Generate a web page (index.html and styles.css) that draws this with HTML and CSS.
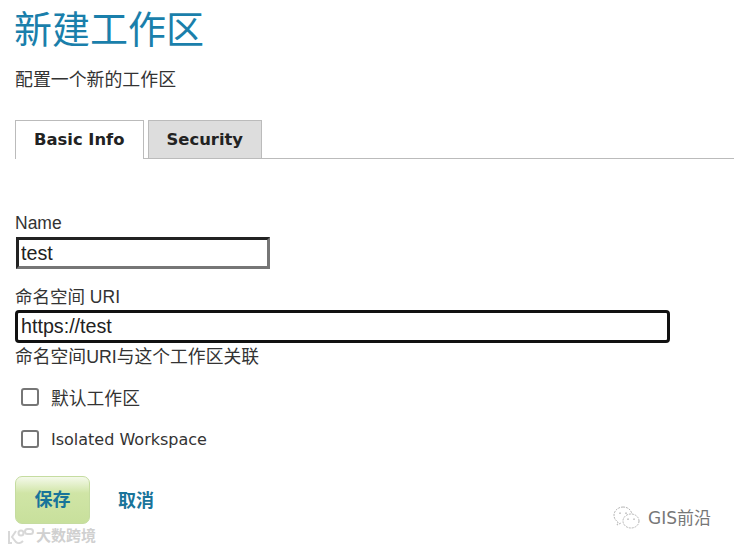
FILE: index.html
```html
<!DOCTYPE html>
<html lang="zh-CN">
<head>
    <meta charset="UTF-8">
    <meta name="viewport" content="width=device-width, initial-scale=1.0">
    <title>新建工作区</title>
    <link rel="stylesheet" href="styles.css">
</head>
<body>
    <h1 class="title">新建工作区</h1>
    <p class="subtitle">配置一个新的工作区</p>

    <div class="tabs">
        <a class="tab active">Basic Info</a>
        <a class="tab">Security</a>
    </div>

    <form class="form">
        <label class="field-label">Name</label>
        <input class="name-input" type="text" value="test">

        <label class="field-label uri-label">命名空间 URI</label>
        <input class="uri-input" type="text" value="https://test">
        <div class="help">命名空间URI与这个工作区关联</div>

        <label class="check first"><span class="box"></span>默认工作区</label>
        <label class="check"><span class="box"></span>Isolated Workspace</label>

        <div class="actions">
            <a class="save">保存</a>
            <a class="cancel">取消</a>
        </div>
    </form>

    <div class="mark-left">
        <svg width="28" height="19" viewBox="0 0 28 19" fill="none" stroke="#d8d8d8" stroke-width="2">
            <path d="M2 4v12h3M9 4L5 10l4 5c2 2 5 1 7-1"/>
            <circle cx="14" cy="6" r="2.5"/>
            <rect x="18" y="2" width="8" height="5" rx="2.5"/>
        </svg>
        <span>大数跨境</span>
    </div>

    <div class="mark-right">
        <svg width="28" height="26" viewBox="0 0 28 26" fill="none" stroke="#b5b5b5" stroke-width="1" stroke-dasharray="2 1">
            <path d="M10 2C5 2 1 6 1 10c0 3 1 5 4 7l-1 3 4-2"/>
            <path d="M10 2c5 0 8 3 9 7"/>
            <ellipse cx="18" cy="16" rx="8" ry="7"/>
            <circle cx="7" cy="8" r="0.6"/>
            <circle cx="13" cy="8" r="0.6"/>
            <circle cx="15" cy="14" r="0.6"/>
            <circle cx="21" cy="14" r="0.6"/>
        </svg>
        <span>GIS前沿</span>
    </div>
</body>
</html>
```

FILE: styles.css
```css
body {
    margin: 0;
    padding: 0 0 0 15px;
    height: 551px;
    box-sizing: border-box;
    overflow: hidden;
    position: relative;
    background-color: #ffffff;
    color: #222222;
    font-family: "DejaVu Sans", "Noto Sans CJK SC", sans-serif;
}

.title {
    margin: 0 0 0 -1px;
    padding-top: 7px;
    font-size: 38px;
    line-height: 46px;
    font-weight: normal;
    color: #1a7fab;
}

.subtitle {
    margin: 13px 0 0;
    font-size: 17.9px;
    line-height: 28px;
    color: #333333;
}

.tabs {
    display: flex;
    gap: 4px;
    margin-top: 26px;
    height: 38px;
    border-bottom: 1px solid #bbbbbb;
}

.tab {
    box-sizing: border-box;
    height: 38px;
    padding: 0 18px;
    border: 1px solid #bbbbbb;
    border-bottom: none;
    background-color: #dddddd;
    font-size: 16.4px;
    font-weight: bold;
    line-height: 38px;
}

.tab.active {
    height: 39px;
    background-color: #ffffff;
}

.form {
    padding-top: 52px;
}

.field-label {
    display: block;
    font-family: "Liberation Sans", "Noto Sans CJK SC", sans-serif;
    font-size: 17.5px;
    line-height: 24px;
    color: #333333;
}

.uri-label {
    margin-top: 16px;
}

input {
    display: block;
    box-sizing: border-box;
    margin-left: 1px;
    padding: 0 2px;
    font-family: "Liberation Sans", sans-serif;
    font-size: 19.7px;
    color: #222222;
    outline: none;
}

.name-input {
    width: 254px;
    height: 32px;
    margin-top: 2px;
    border: 3px solid;
    border-color: #222222 #767676 #767676 #222222;
}

.uri-input {
    width: 655px;
    height: 33px;
    margin-left: 0;
    margin-top: 1px;
    padding: 0 3px;
    border: 3px solid #111111;
    border-radius: 4px;
}

.help {
    font-family: "Liberation Sans", "Noto Sans CJK SC", sans-serif;
    font-size: 17.8px;
    line-height: 24px;
    color: #333333;
    margin-top: 2px;
}

.check {
    display: flex;
    align-items: center;
    gap: 12px;
    margin-left: 6px;
    height: 24px;
    font-size: 16px;
    color: #333333;
    margin-top: 18px;
}

.check.first {
    margin-top: 16px;
    font-size: 17.8px;
}

.box {
    box-sizing: border-box;
    width: 18px;
    height: 18px;
    border: 2px solid #767676;
    border-radius: 3px;
    background-color: #ffffff;
}

.actions {
    display: flex;
    align-items: center;
    gap: 28px;
    margin-top: 25px;
}

.save {
    box-sizing: border-box;
    width: 75px;
    height: 48px;
    border: 1px solid #c5dca0;
    border-radius: 7px;
    background: linear-gradient(#f4f9ea, #d0e5a6 35%, #c8e09c);
    color: #19749a;
    font-size: 18px;
    font-weight: bold;
    line-height: 45px;
    text-align: center;
}

.cancel {
    color: #19749a;
    font-size: 18px;
    font-weight: bold;
    margin-top: -2px;
}

.mark-left {
    position: absolute;
    left: 7px;
    top: 526px;
    display: flex;
    align-items: center;
    gap: 1px;
    color: #d0d0d0;
    font-size: 15px;
    font-weight: bold;
    line-height: 20px;
}

.mark-right {
    position: absolute;
    left: 613px;
    top: 505px;
    display: flex;
    align-items: center;
    gap: 7px;
    color: #777777;
    font-size: 17px;
    line-height: 26px;
}
```
